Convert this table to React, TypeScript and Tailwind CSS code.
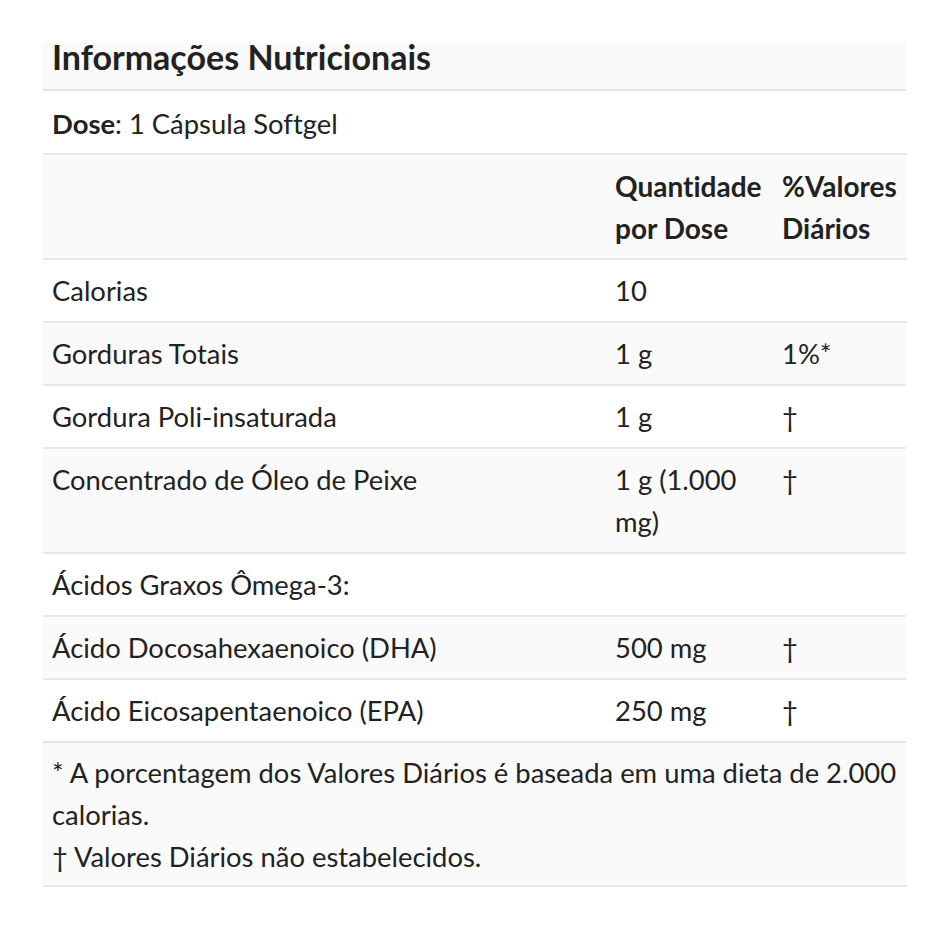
import React from "react";

const rows: { label: string; qty: string; dv: string; bg: string }[] = [
  { label: "Calorias", qty: "10", dv: "", bg: "bg-white" },
  { label: "Gorduras Totais", qty: "1 g", dv: "1%*", bg: "bg-[#fafafa]" },
  { label: "Gordura Poli-insaturada", qty: "1 g", dv: "†", bg: "bg-white" },
  { label: "Concentrado de Óleo de Peixe", qty: "1 g (1.000 mg)", dv: "†", bg: "bg-[#fafafa]" },
  { label: "Ácidos Graxos Ômega-3:", qty: "", dv: "", bg: "bg-white" },
  { label: "Ácido Docosahexaenoico (DHA)", qty: "500 mg", dv: "†", bg: "bg-[#fafafa]" },
  { label: "Ácido Eicosapentaenoico (EPA)", qty: "250 mg", dv: "†", bg: "bg-white" },
];

export default function App() {
  const cell = "pl-[9px] pr-[9px] pt-[10px] pb-[9px] align-top";
  return (
    <div
      className="min-h-[928px] w-[949px] bg-white text-[#222] pt-[42px] pl-[43px] [font-variant-ligatures:none]"
      style={{ fontFamily: "Lato, 'Noto Sans', sans-serif" }}
    >
      <table className="w-[863px] table-fixed border-collapse text-[27.4px] leading-[42px]">
        <colgroup>
          <col className="w-[563px]" />
          <col className="w-[167px]" />
          <col className="w-[133px]" />
        </colgroup>
        <tbody>
          <tr className="bg-[#fafafa] border-b-2 border-[#e6e6e6]">
            <td colSpan={3} className="pl-[9px] pt-0 pb-[17px] text-[34px] leading-[30px] font-bold">
              Informações Nutricionais
            </td>
          </tr>
          <tr className="bg-white border-b-2 border-[#e6e6e6]">
            <td colSpan={3} className="pl-[9px] pr-[9px] pt-[12px] pb-[8px]">
              <span className="font-bold">Dose</span>: 1 Cápsula Softgel
            </td>
          </tr>
          <tr className="bg-[#fafafa] border-b-2 border-[#e6e6e6] font-bold text-[28px]">
            <td className={cell}></td>
            <td className={cell}>Quantidade por Dose</td>
            <td className={cell}>%Valores Diários</td>
          </tr>
          {rows.map((r) => (
            <tr key={r.label} className={`${r.bg} border-b-2 border-[#e6e6e6]`}>
              <td className={cell}>{r.label}</td>
              <td className={cell}>{r.qty}</td>
              <td className={cell}>{r.dv}</td>
            </tr>
          ))}
          <tr className="bg-[#fafafa] border-b-2 border-[#e6e6e6]">
            <td colSpan={3} className="pl-[9px] pr-[4px] pt-[9px] pb-[7px]">
              * A porcentagem dos Valores Diários é baseada em uma dieta de 2.000 calorias.
              <br />† Valores Diários não estabelecidos.
            </td>
          </tr>
        </tbody>
      </table>
    </div>
  );
}
